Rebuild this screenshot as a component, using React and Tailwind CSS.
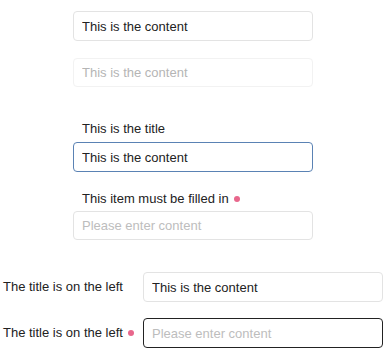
import React from 'react';

const Dot = () => <span className="ml-[5px] inline-block h-[6px] w-[6px] rounded-full bg-[#e8678c]" />;

const App = () => {
  return (
    <div className="w-[388px] h-[357px] bg-white font-['Liberation_Sans',Arial,sans-serif] text-[13px] text-[#222]">
      <div className="pl-[73px] pt-[11px]">
        <input
          readOnly
          value="This is the content"
          className="block w-[240px] h-[30px] rounded-[4px] border border-[#e3e3e3] px-[8px] text-[13px] text-[#222] outline-none"
        />
        <input
          disabled
          value="This is the content"
          className="mt-[17px] block w-[240px] h-[29px] rounded-[4px] border border-[#f2f2f2] bg-white px-[8px] text-[13px] text-[#b5b5b5] outline-none"
        />

        <div className="mt-[32px] h-[20px] pl-[9px] leading-[20px]">This is the title</div>
        <input
          readOnly
          value="This is the content"
          className="mt-[3px] block w-[240px] h-[30px] rounded-[4px] border border-[#5a82b4] px-[8px] text-[13px] text-[#222] outline-none"
        />

        <div className="mt-[17px] flex h-[20px] items-center pl-[9px] leading-[20px]">
          This item must be filled in
          <Dot />
        </div>
        <input
          placeholder="Please enter content"
          className="mt-[2px] block w-[240px] h-[29px] rounded-[4px] border border-[#e3e3e3] px-[8px] text-[13px] outline-none placeholder:text-[#bdbdbd]"
        />
      </div>

      <div className="mt-[32px] flex items-center pl-[3px]">
        <div className="w-[140px]">The title is on the left</div>
        <input
          readOnly
          value="This is the content"
          className="block w-[240px] h-[30px] rounded-[4px] border border-[#e3e3e3] px-[8px] text-[13px] text-[#222] outline-none"
        />
      </div>

      <div className="mt-[16px] flex items-center pl-[3px]">
        <div className="flex w-[140px] items-center">
          The title is on the left
          <Dot />
        </div>
        <input
          placeholder="Please enter content"
          className="block w-[240px] h-[30px] rounded-[4px] border border-[#222] px-[8px] text-[13px] outline-none placeholder:text-[#bdbdbd]"
        />
      </div>
    </div>
  );
};

export default App;
